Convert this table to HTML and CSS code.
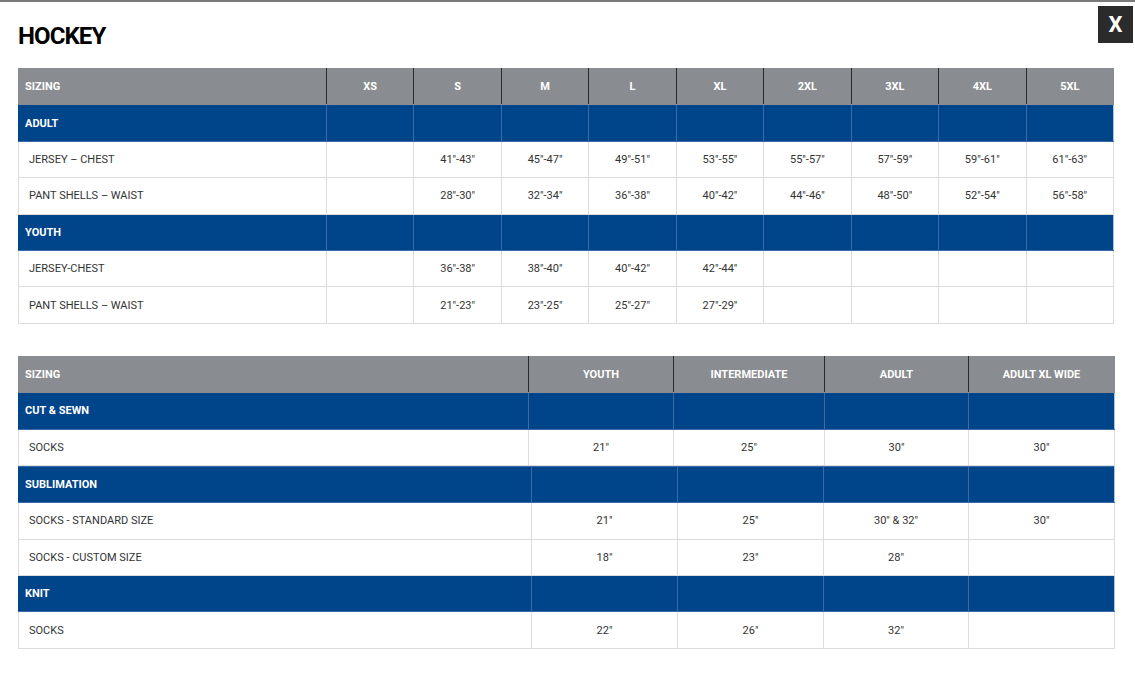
FILE: index.html
```html
<!DOCTYPE html>
<html>
<head>
<meta charset="utf-8">
<link rel="stylesheet" href="styles.css">
</head>
<body>
<div class="modal">
  <button class="close">X</button>
  <h1 class="title">HOCKEY</h1>

  <table class="chart chart-a">
    <colgroup><col class="c-label"><col span="9" class="c-size"></colgroup>
    <tr class="head"><th class="lbl">SIZING</th><th>XS</th><th>S</th><th>M</th><th>L</th><th>XL</th><th>2XL</th><th>3XL</th><th>4XL</th><th>5XL</th></tr>
    <tr class="group"><td class="lbl">ADULT</td><td></td><td></td><td></td><td></td><td></td><td></td><td></td><td></td><td></td></tr>
    <tr class="row"><td class="lbl">JERSEY – CHEST</td><td></td><td>41"-43"</td><td>45"-47"</td><td>49"-51"</td><td>53"-55"</td><td>55"-57"</td><td>57"-59"</td><td>59"-61"</td><td>61"-63"</td></tr>
    <tr class="row"><td class="lbl">PANT SHELLS – WAIST</td><td></td><td>28"-30"</td><td>32"-34"</td><td>36"-38"</td><td>40"-42"</td><td>44"-46"</td><td>48"-50"</td><td>52"-54"</td><td>56"-58"</td></tr>
    <tr class="group"><td class="lbl">YOUTH</td><td></td><td></td><td></td><td></td><td></td><td></td><td></td><td></td><td></td></tr>
    <tr class="row"><td class="lbl">JERSEY-CHEST</td><td></td><td>36"-38"</td><td>38"-40"</td><td>40"-42"</td><td>42"-44"</td><td></td><td></td><td></td><td></td></tr>
    <tr class="row"><td class="lbl">PANT SHELLS – WAIST</td><td></td><td>21"-23"</td><td>23"-25"</td><td>25"-27"</td><td>27"-29"</td><td></td><td></td><td></td><td></td></tr>
  </table>

  <div class="stack">
    <table class="chart chart-b">
      <colgroup><col class="b1"><col class="b2"><col class="b3"><col class="b4"><col class="b5"></colgroup>
      <tr class="head"><th class="lbl">SIZING</th><th>YOUTH</th><th>INTERMEDIATE</th><th>ADULT</th><th>ADULT XL WIDE</th></tr>
      <tr class="group"><td class="lbl">CUT &amp; SEWN</td><td></td><td></td><td></td><td></td></tr>
      <tr class="row"><td class="lbl">SOCKS</td><td>21"</td><td>25"</td><td>30"</td><td>30"</td></tr>
    </table>
    <table class="chart chart-c">
      <colgroup><col class="d1"><col class="d2"><col class="d3"><col class="d4"><col class="d5"></colgroup>
      <tr class="group"><td class="lbl">SUBLIMATION</td><td></td><td></td><td></td><td></td></tr>
      <tr class="row"><td class="lbl">SOCKS - STANDARD SIZE</td><td>21"</td><td>25"</td><td>30" &amp; 32"</td><td>30"</td></tr>
      <tr class="row"><td class="lbl">SOCKS - CUSTOM SIZE</td><td>18"</td><td>23"</td><td>28"</td><td></td></tr>
      <tr class="group"><td class="lbl">KNIT</td><td></td><td></td><td></td><td></td></tr>
      <tr class="row"><td class="lbl">SOCKS</td><td>22"</td><td>26"</td><td>32"</td><td></td></tr>
    </table>
  </div>
</div>
</body>
</html>
```

FILE: styles.css
```css
* { box-sizing: border-box; }
html, body { margin: 0; padding: 0; background: #fff; }
body { font-family: Roboto, "Liberation Sans", Arial, sans-serif; color: #333; }

.modal {
  position: relative;
  border-top: 2px solid #7b7b7b;
  padding: 20px 21px 0 18px;
  height: 683px;
}

.close {
  position: absolute;
  top: 4px;
  right: 2px;
  width: 35px;
  height: 37px;
  border: 0;
  background: #2b2b2b;
  color: #fff;
  font-family: Roboto, "Liberation Sans", Arial, sans-serif;
  font-weight: 700;
  font-size: 22px;
  padding: 0;
  line-height: 37px;
}

.title {
  margin: 0 0 18px;
  font-size: 24px;
  line-height: 28px;
  font-weight: 700;
  letter-spacing: -0.9px;
  color: #000;
}

.chart {
  width: 1096px;
  border-collapse: collapse;
  table-layout: fixed;
  font-size: 11px;
}
.chart-a { margin-bottom: 32px; }

.c-label { width: 308px; }

.b1 { width: 510px; } .b2 { width: 145px; } .b3 { width: 151px; } .b4 { width: 144px; } .b5 { width: 146px; }
.d1 { width: 513px; } .d2 { width: 146px; } .d3 { width: 146px; } .d4 { width: 145px; } .d5 { width: 146px; }

.chart th, .chart td {
  height: 36.4px;
  padding: 0 6px;
  text-align: center;
  vertical-align: middle;
  white-space: nowrap;
}

.head th {
  background: #898c90;
  color: #fff;
  font-weight: 700;
  border-left: 1px solid #2a2a2a;
  border-right: 1px solid #2a2a2a;
  border-top: 1px solid #898c90;
  border-bottom: 1px solid #898c90;
}
.head th:first-child { border-left-color: #898c90; }
.head th:last-child { border-right-color: #898c90; }

.group td {
  background: #00448a;
  color: #fff;
  font-weight: 700;
  border: 1px solid #3c6aa8;
}
.group td:first-child { border-left-color: #00448a; }
.group td:last-child { border-right-color: #a9c4ea; }

.row td {
  background: #fff;
  color: #333;
  border: 1px solid #dcdcdc;
}

.chart .lbl {
  text-align: left;
  padding-left: 6px;
}
.row td.lbl { padding-left: 10px; }
```
